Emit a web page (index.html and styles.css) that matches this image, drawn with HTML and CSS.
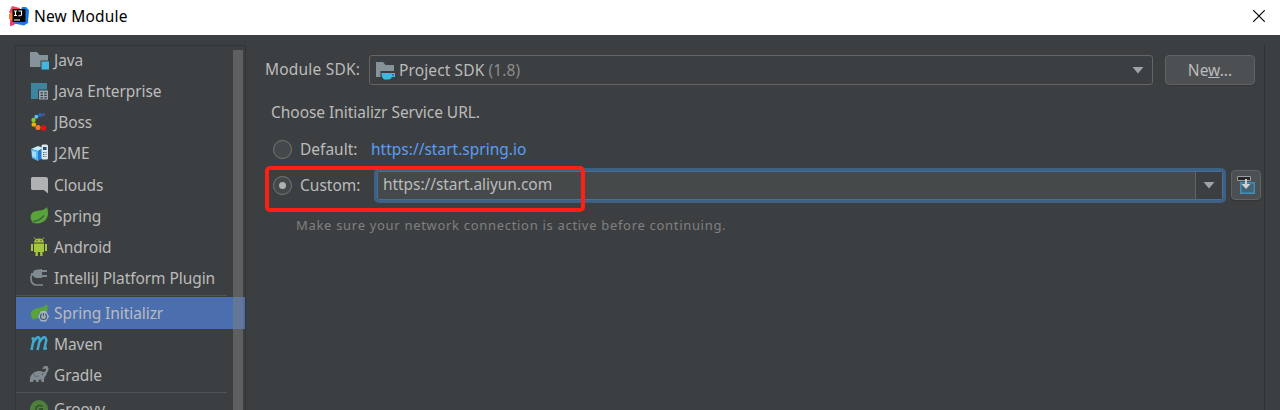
FILE: index.html
```html
<!DOCTYPE html>
<html lang="en">
<head>
<meta charset="utf-8">
<title>New Module</title>
<link rel="stylesheet" href="styles.css">
</head>
<body>
<header class="titlebar">
  <svg class="logo" width="20" height="20" viewBox="0 0 20 20"><path d="M3 0l8 2-1 9-9 2 2-4-3-3z" fill="#f9405c"/><path d="M0 8l5-2 3 11-5 2.500H1l1-4-2-3z" fill="#f77b3b"/><path d="M1 14l6 1-2 4-4 1z" fill="#ef3d78"/><path d="M13 1l4 0 3 3-1 13-4 2.500-10-2L12 4z" fill="#1878e8"/><rect x="3.500" y="3" width="13" height="13" fill="#080808"/><path d="M5 5h3M6.500 5v4.500M5 9.500h3M9.500 5h3v3.500q0 1.200-1.400 1.200H9.400M5 14h6" fill="none" stroke="#fff" stroke-width="1.100"/></svg>
  <h1 class="title">New Module</h1>
  <svg class="close" width="12" height="12" viewBox="0 0 12 12"><path d="M.3.3l11.4 11.4M11.7.3L.3 11.7" stroke="#000" stroke-width="1.15"/></svg>
</header>
<div class="dialog">
  <aside class="sidebar">
    <ul class="list first">
      <li class="item"><svg class="icon" width="20" height="20" viewBox="0 0 20 20"><path d="M1 2h7l2.500 3H19v5.500h-7.500V17H1z" fill="#87939a"/><rect x="12.500" y="11.500" width="7.500" height="8" fill="#40b6e0"/></svg><span>Java</span></li>
      <li class="item"><svg class="icon" width="20" height="20" viewBox="0 0 20 20"><path d="M2 2h16v6.500H9V18H2z" fill="#3d849f"/><path d="M10 9.500h9v9h-9z" fill="#9aa7b0"/><path d="M11.500 11.800h2.500M15.200 11.800h2.500M11.500 14.300h2.500M15.200 14.300h2.500M11.500 16.800h2.500M15.200 16.800h2.500" stroke="#3c3f41" stroke-width="1.300"/></svg><span>Java Enterprise</span></li>
      <li class="item"><svg class="icon" width="20" height="20" viewBox="0 0 20 20"><circle cx="14.500" cy="2.500" r="1.500" fill="#5751a0"/><circle cx="11" cy="3" r="1.900" fill="#1872c0"/><circle cx="7.300" cy="4.700" r="2" fill="#62b8f2"/><circle cx="4.500" cy="8" r="2.200" fill="#88ca19"/><circle cx="4.800" cy="12.500" r="2.300" fill="#eeb400"/><circle cx="9" cy="15.500" r="2.500" fill="#ff7b20"/><circle cx="14.500" cy="16" r="2.700" fill="#f20d16"/></svg><span>JBoss</span></li>
      <li class="item"><svg class="icon" width="20" height="20" viewBox="0 0 20 20"><path d="M2 6l7-3 5 2-5 3z" fill="#c3efff"/><path d="M2 6l7 2v10l-6-3z" fill="#58b9f5"/><path d="M9 8l5-2v9l-5 3z" fill="#2479d0"/><path d="M3 8l4 1v6l-4-2z" fill="#a3ddfc"/><rect x="12.500" y="1.500" width="6.500" height="15" rx="1.500" fill="#dce7ed"/><path d="M14 4h3.500v3H14z" fill="#214b7a"/><path d="M14 9.500h3.500M14 11.500h3.500M14 13.500h3.500" stroke="#48687e" stroke-dasharray="1 .5"/></svg><span>J2ME</span></li>
      <li class="item"><svg class="icon" width="20" height="20" viewBox="0 0 20 20"><path d="M3.500 2h13Q19 2 19 4v14.500L14.800 15H3.500Q2 15 2 13.500v-10Q2 2 3.500 2z" fill="#afb1b3"/></svg><span>Clouds</span></li>
      <li class="item"><svg class="icon" width="20" height="20" viewBox="0 0 20 20"><path d="M18 1c1.500 5 1.500 10-1.500 13-3.200 3.500-8.500 4.500-13 2.500C-.3 10.500 2 6 7.500 5c5-.5 8-1 10.500-4z" fill="#59a33b"/><path d="M4 15.300c5-.3 8.500-2.300 11-6" fill="none" stroke="#3c5d3c" stroke-width="1.300"/></svg><span>Spring</span></li>
      <li class="item"><svg class="icon" width="20" height="20" viewBox="0 0 20 20"><path d="M6.500 2.500L5.300.5M13.500 2.500l1.200-2" fill="none" stroke="#a4c639"/><path d="M5 5.500Q5.500 1.500 10 1.500T15 5.500zM5 6.500h10V15H5zM2 7h2v7H2zM16 7h2v7h-2zM6.500 14h2.300v5H6.500zM11.200 14h2.300v5h-2.300z" fill="#a4c639"/><path d="M7.500 3.500h1M11.500 3.500h1" stroke="#3c3f41"/></svg><span>Android</span></li>
      <li class="item"><svg class="icon" width="20" height="20" viewBox="0 0 20 20"><path d="M6 2l7-1v9H7.500Q4.500 9.500 3.500 7H2V5h2Q4 3 6 2z" fill="#7f8b91"/><path d="M13 3h5M13 8h5" stroke="#7f8b91" stroke-width="2"/><path d="M5 5.500Q2 6 2 10.500c0 4.500 2.500 6.500 6 6.500h6" fill="none" stroke="#7f8b91" stroke-width="1.700"/></svg><span>IntelliJ Platform Plugin</span></li>
    </ul>
    <hr class="separator">
    <ul class="list">
      <li class="item selected"><svg class="icon" width="20" height="20" viewBox="0 0 20 20"><path d="M18 1c.7 3 .8 5 .4 7.500H12l-3 4V15l-5 1.500C-.3 11 2 7 7 5.500 12 4.800 15.500 4 18 1z" fill="#59a33b"/><path d="M12 8h5l3 5.500-3 5h-5L9 13.500z" fill="#a7b5bd"/><circle cx="14.500" cy="13.500" r="3" fill="none" stroke="#465b76" stroke-width="1.200"/><path d="M14.500 9.500v4" stroke="#a7b5bd" stroke-width="3"/><path d="M14.500 10v3.500" stroke="#465b76" stroke-width="1.200"/></svg><span>Spring Initializr</span></li>
      <li class="item"><svg class="icon" width="20" height="20" viewBox="0 0 20 20"><path d="M2.500 4.500h3M5 4L2.500 16M4.500 8Q10-.5 10.800 6L8.500 16M10.500 8Q16-.5 17.300 6l-1.800 8.500h2.500" fill="none" stroke="#40a9cf" stroke-width="2.500"/></svg><span>Maven</span></li>
      <li class="item"><svg class="icon" width="20" height="20" viewBox="0 0 20 20"><path d="M1 17c-.5-4 .5-7.500 4-9.500C8 5.500 12 5.500 14 7c2 0 3.500-1.700 2.800-3.100-.6-1-1.800-.2-2.100.7l-1.300-1C15-.1 19-.1 19.500 3.400c.3 3-2.200 4.300-2.500 7.100-1.500 1.500-2 2-2 6.500h-2.500l-.5-2.500-2 .2L9.500 17H7l-.5-2.200-2 .2L4 17z" fill="#7f8b91"/><path d="M4.500 8.500l1.500 3 4-.5" fill="none" stroke="#596369" stroke-width=".7"/><circle cx="13.500" cy="9" r=".7" fill="#3c3f41"/></svg><span>Gradle</span></li>
    </ul>
    <hr class="separator second">
    <ul class="list">
      <li class="item"><svg class="icon" width="20" height="20" viewBox="0 0 20 20"><circle cx="10" cy="10" r="9" fill="#4f7f3c"/><path d="M13.500 7.500Q10 5 7.500 8q-1.800 4 2 5.300 3.300.4 3.800-3.300H10" fill="none" stroke="#304b29" stroke-width="1.400"/></svg><span>Groovy</span></li>
    </ul>
    <div class="scrollbar"></div>
  </aside>
  <main class="content">
    <div class="sdk-row">
      <span class="sdk-label">Module SDK:</span>
      <div class="combo">
        <svg class="icon" width="20" height="20" viewBox="0 0 20 20"><path d="M0 2h7l2.500 3H18v6H4.500v6H0z" fill="#87939a"/><path d="M5.500 13H19v4h-3q-1 2-3 2.500H8Q5.500 17.500 5.500 13z" fill="#40b6e0"/><path d="M16.200 14.300h1.500v1.200h-1.500z" fill="#3c3f41"/></svg>
        <span class="sdk-name">Project SDK <span class="version">(1.8)</span></span>
        <svg class="arrow" width="12" height="7" viewBox="0 0 12 7"><path d="M.5 0h11L6 6.500z" fill="#9fa3a6"/></svg>
      </div>
      <button class="button new">Ne<u>w</u>...</button>
    </div>
    <p class="prompt">Choose Initializr Service URL.</p>
    <div class="option-row default">
      <i class="radio"></i><span class="option-label">Default:</span><a class="link">https://start.spring.io</a>
    </div>
    <div class="option-row custom">
      <i class="radio checked"></i><span class="option-label custom-label">Custom:</span>
      <div class="url-combo"><span class="url">https://start.aliyun.com</span><span class="drop"><svg width="12" height="7" viewBox="0 0 12 7"><path d="M.5 0h11L6 6.500z" fill="#9fa3a6"/></svg></span></div>
      <button class="button import"><svg class="icon" width="20" height="20" viewBox="0 0 20 20"><path d="M1.500 1.500h13v4h-13z" fill="#252728" stroke="#9b9d9f"/><path d="M4.700 7.700h13.600v10.600H4.700z" fill="#426477" stroke="#3d91bd" stroke-width="1.400"/><path d="M9 4h2v5h3.500L10 14 5.500 9H9z" fill="#ced0d1"/></svg></button>
      <div class="highlight"></div>
    </div>
    <p class="hint">Make sure your network connection is active before continuing.</p>
  </main>
  <div class="edge"></div>
</div>
</body>
</html>
```
FILE: styles.css
```css
* { box-sizing: border-box; }
body { margin: 0; width: 1280px; height: 410px; overflow: hidden; background: #3c3f41; color: #bbbbbb; font: 15.5px/20px "Noto Sans", sans-serif; }
h1, p, ul { margin: 0; padding: 0; font-weight: normal; }
.titlebar { height: 35px; padding: 0 15px 3px 9px; background: #fff; color: #000; display: flex; align-items: center; }
.title { margin-left: 5px; flex: 1; font-size: 15.5px; line-height: 20px; letter-spacing: .2px; }
.dialog { height: 375px; padding: 10px 15px 0; display: flex; align-items: stretch; }
.sidebar { position: relative; width: 231px; height: 365px; overflow: hidden; border: 1px solid #323436; border-bottom: 0; flex: none; }
.list { list-style: none; }
.first { margin-top: -1.5px; }
.item { height: 31.25px; display: flex; align-items: center; padding: 0 0 1px 13px; gap: 5px; white-space: nowrap; }
.icon { flex: none; }
.item span { letter-spacing: -.07px; }
.selected { height: 32px; background: #4b6eaf; }
.separator { width: 211px; height: 1px; border: 0; margin: 0 0 1.5px; background: #515456; }
.separator.second { margin: 0 0 1px; }
.scrollbar { position: absolute; top: 4px; right: 2px; bottom: 0; width: 10px; background: rgba(128, 128, 128, .5); }
.content { flex: 1; min-width: 0; padding: 10px 3px 0 19px; }
.sdk-row { display: flex; height: 30px; align-items: center; }
.sdk-label { width: 104px; padding-bottom: 3px; letter-spacing: .2px; }
.combo { width: 784px; height: 30px; display: flex; align-items: center; border: 1px solid #646464; border-radius: 3px; padding: 0 8px 0 6px; }
.sdk-name { flex: 1; margin-left: 3px; letter-spacing: .12px; }
.version { color: #8c8c8c; }
.button { padding: 0; background: #4c5052; border: 1px solid #606365; border-radius: 4px; color: #bbb; font: inherit; box-shadow: 0 1px 1px #343638; }
.new { width: 90px; height: 30px; margin-left: 12px; }
.prompt { margin: 17px 0 0 6px; letter-spacing: -.04px; }
.option-row { display: flex; align-items: center; position: relative; }
.default { height: 30px; margin-top: 12px; padding-left: 8px; }
.default .option-label, .link { padding-bottom: 1px; }
.radio { width: 19px; height: 19px; border: 1px solid #747677; border-radius: 50%; background: #43494a; flex: none; display: flex; align-items: center; justify-content: center; }
.checked::after { content: ""; width: 7px; height: 7px; background: #b0b0b0; border-radius: 50%; }
.option-label { width: 71px; margin-left: 8px; }
.custom-label { width: 74px; }
.link { color: #589df6; }
.custom { height: 36px; margin-top: 3px; padding-left: 8px; }
.url-combo { width: 852px; height: 35px; border: 3px solid #3d6185; border-radius: 5px; background: #45494a; display: flex; align-items: stretch; justify-content: space-between; box-shadow: inset 0 0 0 1px #466f9b; }
.url { padding: 3px 0 0 6px; letter-spacing: -.06px; }
.drop { width: 27px; margin: 1px; border-left: 1px solid #646464; background: #3c3f41; display: flex; align-items: center; justify-content: center; }
.import { width: 30px; height: 30px; margin-left: 5px; display: flex; align-items: center; justify-content: center; }
.highlight { position: absolute; left: 0; top: -1px; width: 320px; height: 46px; border: 4px solid #ff2015; border-radius: 5px; }
.hint { margin: 12px 0 0 31px; color: #808080; font-size: 13px; letter-spacing: .69px; }
.edge { width: 1px; background: #303234; }
```
